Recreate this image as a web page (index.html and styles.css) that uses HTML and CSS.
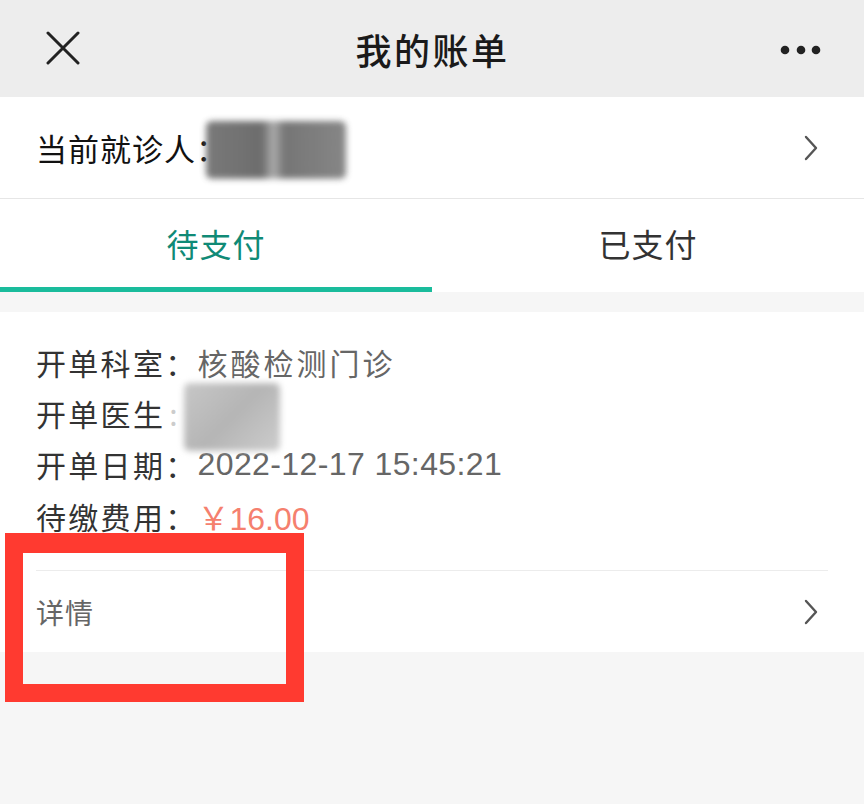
FILE: index.html
```html
<!DOCTYPE html>
<html lang="zh-CN">
<head>
<meta charset="utf-8">
<title>我的账单</title>
<link rel="stylesheet" href="styles.css">
</head>
<body>
<div class="page">
  <header class="nav">
    <svg class="close" width="36" height="34" viewBox="0 0 36 34"><path d="M3 2 L33 32 M33 2 L3 32" stroke="#222" stroke-width="3" fill="none" stroke-linecap="round"/></svg>
    <h1 class="title">我的账单</h1>
    <svg class="more" width="42" height="10" viewBox="0 0 42 10"><circle cx="5" cy="5" r="4.3" fill="#222"/><circle cx="21" cy="5" r="4.3" fill="#222"/><circle cx="36" cy="5" r="4.3" fill="#222"/></svg>
  </header>

  <div class="patient">
    <span class="patient-label">当前就诊人：</span><span class="mask mask-dark"></span>
    <svg class="chev" width="14" height="26" viewBox="0 0 14 26"><path d="M2 2 L12 13 L2 24" stroke="#555" stroke-width="2.4" fill="none" stroke-linecap="round" stroke-linejoin="round"/></svg>
  </div>

  <nav class="tabs">
    <div class="tab active">待支付</div>
    <div class="tab">已支付</div>
  </nav>

  <section class="card">
    <div class="info">
      <div class="line"><span class="label">开单科室：</span><span class="value">核酸检测门诊</span></div>
      <div class="line"><span class="label">开单医生<span class="faint">:</span></span><span class="mask mask-light"></span></div>
      <div class="line"><span class="label">开单日期：</span><span class="value num">2022-12-17 15:45:21</span></div>
      <div class="line"><span class="label">待缴费用：</span><span class="value price">￥16.00</span></div>
    </div>
    <div class="detail">
      <span class="detail-text">详情</span>
      <svg class="chev" width="14" height="26" viewBox="0 0 14 26"><path d="M2 2 L12 13 L2 24" stroke="#555" stroke-width="2.4" fill="none" stroke-linecap="round" stroke-linejoin="round"/></svg>
    </div>
  </section>

  <div class="highlight"></div>
</div>
</body>
</html>
```

FILE: styles.css
```css
* { box-sizing: border-box; }
html, body {
  margin: 0;
  padding: 0;
  background: #f6f6f6;
}
body {
  font-family: "Noto Sans CJK SC", "Noto Sans", "Liberation Sans", sans-serif;
  color: #333;
}
.page {
  position: relative;
  width: 864px;
  min-height: 804px;
  background: #f6f6f6;
}

/* nav bar */
.nav {
  height: 97px;
  background: #ededed;
  display: flex;
  align-items: center;
  justify-content: space-between;
  padding: 0 42px 0 45px;
}
.close { display: block; margin-top: -2px; }
.more { display: block; margin-top: 2px; }
.title {
  margin: 0 0 0 4px;
  font-size: 36px;
  font-weight: 500;
  color: #1a1a1a;
  letter-spacing: 2.5px;
}

/* patient row */
.patient {
  height: 102px;
  background: #fff;
  border-bottom: 1px solid #e6e6e6;
  display: flex;
  align-items: center;
  padding: 0 46px 0 36px;
}
.patient-label {
  font-size: 31px;
  color: #111;
  letter-spacing: 1px;
}
.mask {
  display: inline-block;
  filter: blur(3px);
  border-radius: 6px;
}
.mask-dark {
  width: 140px;
  height: 58px;
  margin-left: -22px;
  margin-top: 4px;
  background:
    repeating-linear-gradient(0deg, rgba(255,255,255,0.25) 0 3px, rgba(0,0,0,0) 3px 7px),
    linear-gradient(90deg, #5a5a5a 0%, #4a4a4a 40%, #9a9a9a 48%, #555 56%, #6a6a6a 100%);
  opacity: 0.9;
}
.patient .chev { margin-left: auto; }
.chev { display: block; }

/* tabs */
.tabs {
  display: flex;
  height: 93px;
  background: #fff;
}
.tab {
  flex: 1;
  display: flex;
  align-items: center;
  justify-content: center;
  font-size: 32px;
  color: #333;
  border-bottom: 5px solid transparent;
  letter-spacing: 1px;
}
.tab.active {
  color: #108a76;
  border-bottom-color: #1abc9c;
}

/* card */
.card {
  margin-top: 20px;
  background: #fff;
}
.info {
  padding: 24px 36px 29px;
}
.line {
  display: flex;
  align-items: center;
  height: 51.3px;
  font-size: 30px;
}
.label {
  color: #333;
  letter-spacing: 2.3px;
}
.faint { color: #ccc; margin-left: 4px; }
.value {
  color: #666;
  letter-spacing: 3px;
}
.num {
  font-family: "Liberation Sans", "Noto Sans CJK SC", sans-serif;
  font-size: 32px;
  letter-spacing: 0.4px;
}
.price {
  color: #f5806e;
  font-family: "Liberation Sans", "Noto Sans CJK SC", sans-serif;
  font-size: 32px;
  letter-spacing: 0;
}
.mask-light {
  width: 96px;
  height: 68px;
  margin-left: 4px;
  margin-top: 8px;
  background:
    repeating-linear-gradient(0deg, rgba(255,255,255,0.3) 0 3px, rgba(0,0,0,0) 3px 6px),
    linear-gradient(135deg, #bdbdbd, #a8a8a8 50%, #c4c4c4);
}
.detail {
  margin: 0 36px;
  height: 82px;
  border-top: 1px solid #ececec;
  display: flex;
  align-items: center;
  padding-right: 10px;
}
.detail-text {
  font-size: 28px;
  color: #666;
  letter-spacing: 1px;
}
.detail .chev { margin-left: auto; }

/* annotation overlay */
.highlight {
  position: absolute;
  left: 5px;
  top: 533px;
  width: 299px;
  height: 169px;
  border: 18px solid #ff3a30;
  border-top-width: 20px;
}
```
